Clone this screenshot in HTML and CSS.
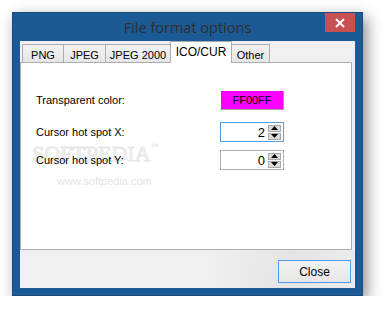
FILE: index.html
```html
<!DOCTYPE html>
<html lang="en">
<head>
  <meta charset="UTF-8">
  <title>File format options</title>
  <link rel="stylesheet" href="styles.css">
</head>
<body>
  <div class="window">
    <div class="titlebar">
      <span class="title">File format options</span>
      <span class="close-x">
        <svg width="10" height="10" viewBox="0 0 10 10"><path d="M1 1 L9 9 M9 1 L1 9" stroke="#fff" stroke-width="2"/></svg>
      </span>
    </div>
    <div class="client">
      <div class="tabs">
        <div class="tab w-png">PNG</div>
        <div class="tab w-jpeg">JPEG</div>
        <div class="tab w-j2k">JPEG 2000</div>
        <div class="tab active">ICO/CUR</div>
        <div class="tab w-other">Other</div>
      </div>
      <div class="panel">
        <div class="watermark">SOFTPEDIA<sup>™</sup></div>
        <div class="watermark-url">www.softpedia.com</div>
        <div class="row row-color">
          <span class="label">Transparent color:</span>
          <span class="swatch">FF00FF</span>
        </div>
        <div class="row row-x">
          <span class="label">Cursor hot spot X:</span>
          <span class="spin focused">
            <span class="value">2</span>
            <span class="arrows">
              <span class="arrow"><svg width="7" height="4" viewBox="0 0 7 4"><path d="M0 4 L3.5 0 L7 4 Z" fill="#000"/></svg></span>
              <span class="arrow"><svg width="7" height="4" viewBox="0 0 7 4"><path d="M0 0 L3.5 4 L7 0 Z" fill="#000"/></svg></span>
            </span>
          </span>
        </div>
        <div class="row row-y">
          <span class="label">Cursor hot spot Y:</span>
          <span class="spin">
            <span class="value">0</span>
            <span class="arrows">
              <span class="arrow"><svg width="7" height="4" viewBox="0 0 7 4"><path d="M0 4 L3.5 0 L7 4 Z" fill="#000"/></svg></span>
              <span class="arrow"><svg width="7" height="4" viewBox="0 0 7 4"><path d="M0 0 L3.5 4 L7 0 Z" fill="#000"/></svg></span>
            </span>
          </span>
        </div>
      </div>
      <div class="footer">
        <button class="btn">Close</button>
      </div>
    </div>
  </div>
</body>
</html>
```

FILE: styles.css
```css
body {
  margin: 0;
  padding: 12px 0 0 12px;
  background-color: #fff;
  font-family: "Liberation Sans", Arial, sans-serif;
}
.window {
  width: 351px;
  height: 284px;
  box-sizing: border-box;
  background-color: #1b5a95;
  border: 1px solid #174b7c;
  box-shadow: 4px 5px 14px rgba(0, 0, 0, 0.45);
  display: flex;
  flex-direction: column;
}
.titlebar {
  height: 28px;
  display: flex;
  align-items: center;
  justify-content: center;
  position: relative;
}
.title {
  font-family: "Open Sans", "Noto Sans", sans-serif;
  font-size: 14.5px;
  color: #2e2e2e;
  margin-top: 1px;
}
.close-x {
  position: absolute;
  right: 7px;
  top: 0;
  width: 30px;
  height: 19px;
  background-color: #c75050;
  display: flex;
  align-items: center;
  justify-content: center;
}
.client {
  margin: 0 7px 7px 7px;
  flex: 1;
  background-color: #f0f0f0;
  display: flex;
  flex-direction: column;
}
.tabs {
  display: flex;
  align-items: flex-end;
  padding: 1px 0 0 2px;
  height: 20px;
  position: relative;
  z-index: 1;
}
.tab {
  height: 18px;
  box-sizing: border-box;
  border: 1px solid #adadad;
  border-bottom: none;
  margin-right: -1px;
  background: linear-gradient(#f3f3f3, #e6e6e6);
  font-size: 11px;
  color: #000;
  display: flex;
  align-items: center;
  justify-content: center;
  padding-top: 2px;
}
.w-png { width: 42px; }
.w-jpeg { width: 43px; }
.w-j2k { width: 66px; }
.w-other { width: 39px; }
.tab.active {
  width: 62px;
  height: 22px;
  margin-bottom: -1px;
  background: #fff;
  font-size: 12px;
  padding-top: 0;
  padding-bottom: 2px;
}
.panel {
  width: 332px;
  height: 188px;
  box-sizing: border-box;
  border: 1px solid #adadad;
  background-color: #fff;
  padding: 27px 0 0 15px;
  position: relative;
}
.row {
  display: flex;
  align-items: center;
  height: 20px;
  position: relative;
}
.row-x { margin-top: 12px; }
.row-y { margin-top: 8px; }
.label {
  width: 184px;
  font-size: 11px;
  color: #000;
}
.swatch {
  width: 64px;
  height: 20px;
  box-sizing: border-box;
  background-color: #ff00ff;
  border-top: 1px solid #fff;
  border-left: 1px solid #fff;
  border-right: 1px solid #a0a0a0;
  border-bottom: 1px solid #a0a0a0;
  font-size: 11px;
  display: flex;
  align-items: center;
  justify-content: center;
}
.spin {
  width: 64px;
  height: 20px;
  box-sizing: border-box;
  border: 1px solid #adadad;
  background: #fff;
  display: flex;
  align-items: center;
  justify-content: flex-end;
  padding-right: 2px;
}
.spin.focused {
  border-color: #569de5;
}
.value {
  font-size: 13px;
  margin-right: 3px;
}
.arrows {
  display: flex;
  flex-direction: column;
  gap: 1px;
}
.arrow {
  width: 13px;
  height: 7px;
  box-sizing: border-box;
  border: 1px solid #a8a8a8;
  background: #dcdcdc;
  display: flex;
  align-items: center;
  justify-content: center;
}
.watermark {
  position: absolute;
  left: 11px;
  top: 80px;
  font-family: "Liberation Serif", serif;
  font-size: 22px;
  line-height: 1;
  color: #f6f6f6;
  -webkit-text-stroke: 1px #e6e6e6;
}
.watermark sup {
  font-size: 8px;
  vertical-align: top;
  -webkit-text-stroke: 0;
  color: #dcdcdc;
}
.watermark-url {
  position: absolute;
  left: 36px;
  top: 112px;
  font-size: 11px;
  color: #e4e4e4;
}
.footer {
  flex: 1;
  display: flex;
  justify-content: flex-end;
  align-items: flex-start;
  padding: 10px 4px 0 0;
  background: linear-gradient(100deg, #f0f0f0 55%, #e4e4e4 80%, #ececec);
}
.btn {
  width: 73px;
  height: 23px;
  border: 1px solid #4a9ef0;
  background: linear-gradient(#f2f2f2, #e6e6e6);
  font-family: "Liberation Sans", Arial, sans-serif;
  font-size: 12px;
  color: #000;
  padding: 0;
}
```
